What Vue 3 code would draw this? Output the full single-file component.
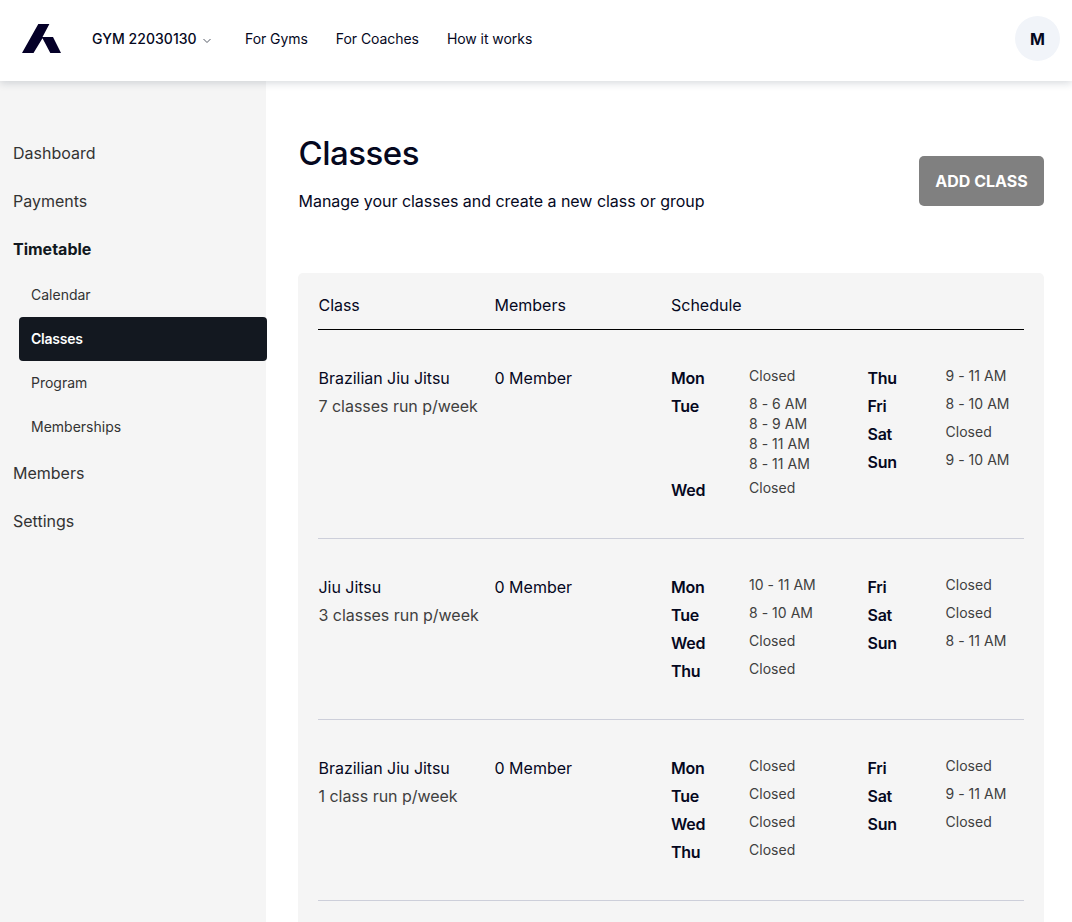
<script setup>
const subs = ['Calendar', 'Classes', 'Program', 'Memberships']
const C = ['Closed']
const rows = [
  { name: 'Brazilian Jiu Jitsu', run: '7 classes run p/week', cols: [
    [['Mon', C], ['Tue', ['8 - 6 AM', '8 - 9 AM', '8 - 11 AM', '8 - 11 AM']], ['Wed', C]],
    [['Thu', ['9 - 11 AM']], ['Fri', ['8 - 10 AM']], ['Sat', C], ['Sun', ['9 - 10 AM']]]] },
  { name: 'Jiu Jitsu', run: '3 classes run p/week', cols: [
    [['Mon', ['10 - 11 AM']], ['Tue', ['8 - 10 AM']], ['Wed', C], ['Thu', C]],
    [['Fri', C], ['Sat', C], ['Sun', ['8 - 11 AM']]]] },
  { name: 'Brazilian Jiu Jitsu', run: '1 class run p/week', cols: [
    [['Mon', C], ['Tue', C], ['Wed', C], ['Thu', C]],
    [['Fri', C], ['Sat', ['9 - 11 AM']], ['Sun', C]]] },
]
</script>

<template>
  <div class="page">
    <header class="top">
      <svg class="logo" width="40" height="30" viewBox="0 0 40 30">
        <path d="M16.300 0H27.400L20.500 13H31L39 29H28.300L20.500 14.200L11.500 29H0Z" fill="#050028" />
      </svg>
      <div class="gym">GYM 22030130
        <svg width="8" height="6" viewBox="0 0 8 6"><path d="M.5 1L4 4.500L7.500 1" fill="none" stroke="#555a66" /></svg>
      </div>
      <nav class="links"><a>For Gyms</a><a>For Coaches</a><a>How it works</a></nav>
      <div class="avatar">M</div>
    </header>
    <div class="body">
      <aside class="side">
        <a class="item">Dashboard</a>
        <a class="item">Payments</a>
        <a class="item bold">Timetable</a>
        <div class="subs">
          <a v-for="s in subs" :key="s" class="sub" :class="{ active: s === 'Classes' }">{{ s }}</a>
        </div>
        <a class="item">Members</a>
        <a class="item">Settings</a>
      </aside>
      <main class="main">
        <div class="head">
          <div>
            <h1>Classes</h1>
            <p>Manage your classes and create a new class or group</p>
          </div>
          <button class="add">ADD CLASS</button>
        </div>
        <section class="card">
          <div class="row thead"><span>Class</span><span>Members</span><span>Schedule</span></div>
          <div v-for="(r, i) in rows" :key="i" class="row entry">
            <div><div class="name">{{ r.name }}</div><div class="run">{{ r.run }}</div></div>
            <div>0 Member</div>
            <div class="sched">
              <div v-for="(c, j) in r.cols" :key="j">
                <div v-for="d in c" :key="d[0]" class="day">
                  <b>{{ d[0] }}</b>
                  <div class="times"><div v-for="(t, k) in d[1]" :key="k">{{ t }}</div></div>
                </div>
              </div>
            </div>
          </div>
        </section>
      </main>
    </div>
  </div>
</template>

<style>
body { margin: 0; }
</style>
<style scoped>
.page { height: 922px; overflow: hidden; display: flex; flex-direction: column; font: 16px/28px Inter, sans-serif; color: #05081e; background: #fff; }
.top { height: 81px; flex: none; box-sizing: border-box; display: flex; align-items: center; padding: 0 12px 4px 22px; box-shadow: 0 2px 8px rgba(30,45,65,.18); position: relative; z-index: 1; background: #fff; font-size: 14px; }
.gym { margin-left: 30px; width: 153px; font-weight: 500; white-space: nowrap; letter-spacing: .05px; }
.gym svg { margin-left: 2px; }
.links { display: flex; gap: 28px; letter-spacing: -.06px; }
.avatar { margin-left: auto; width: 45px; height: 45px; border-radius: 50%; background: #f1f4f9; display: flex; align-items: center; justify-content: center; font-size: 16px; font-weight: 700; }
.body { flex: 1; display: flex; min-height: 0; }
.side { width: 266px; flex: none; background: #f5f5f5; padding-top: 48px; box-sizing: border-box; color: #333; }
.item { display: block; height: 48px; line-height: 48px; padding-left: 13px; }
.bold { font-weight: 700; color: #111820; }
.subs { padding-left: 19px; }
.sub { display: block; width: 248px; height: 44px; line-height: 44px; box-sizing: border-box; padding-left: 12px; font-size: 14px; border-radius: 4px; }
.active { background: #131820; color: #fff; font-weight: 600; letter-spacing: -.25px; }
.main { flex: 1; padding: 52px 28px 0 32px; }
.head { display: flex; justify-content: space-between; height: 140px; }
h1 { font-size: 33px; line-height: 40px; font-weight: 500; margin: 0; letter-spacing: -.5px; padding-left: .5px; }
p { margin: 14px 0 0; padding-left: .5px; letter-spacing: -.03px; }
.add { margin-top: 23px; width: 125px; height: 50px; border: 0; border-radius: 5px; background: #808080; color: #fff; font: 700 16px Inter, sans-serif; padding: 0; }
.card { background: #f5f5f5; border-radius: 5px; padding: 0 20px; height: 800px; }
.row { display: grid; grid-template-columns: 176.500px 176.500px 1fr; }
.thead { padding-top: 18px; height: 38px; border-bottom: 1px solid #000; }
.thead span:first-child, .name, .run { padding-left: .5px; letter-spacing: -.03px; }
.entry { padding: 34px 0; border-bottom: 1px solid #cdcfda; white-space: nowrap; }
.run { color: #3f3f3f; }
.sched { display: grid; grid-template-columns: 196.500px 1fr; }
.day { display: grid; grid-template-columns: 78px 1fr; }
b { font-weight: 600; letter-spacing: -.25px; }
.times { font-size: 14px; line-height: 20px; padding: 2px 0; color: #404040; letter-spacing: .03px; }
</style>
